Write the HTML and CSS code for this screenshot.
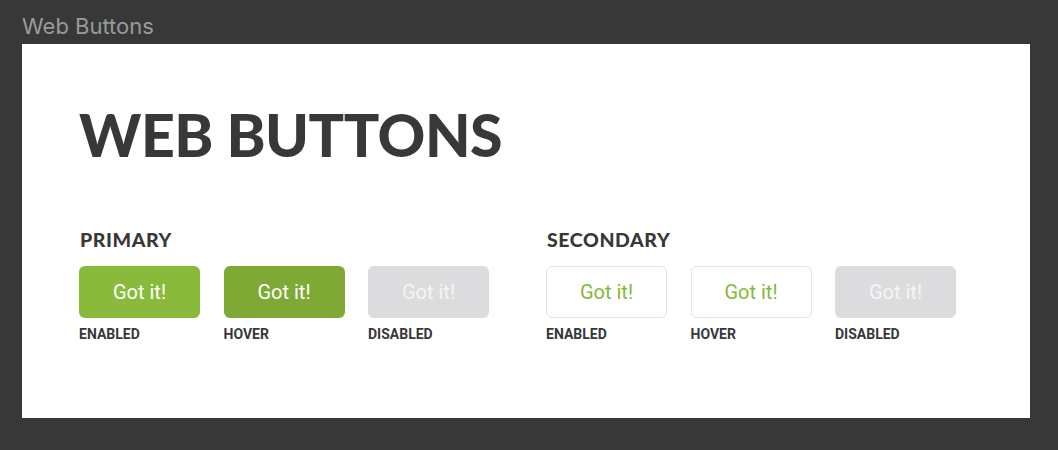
FILE: index.html
```html
<!DOCTYPE html>
<html>
<head>
<meta charset="utf-8">
<link rel="stylesheet" href="styles.css">
</head>
<body>
<div class="frame-title">Web Buttons</div>
<div class="panel">
  <h1 class="heading">WEB BUTTONS</h1>
  <div class="groups">
    <section class="group">
      <h2 class="group-title">PRIMARY</h2>
      <div class="row">
        <div class="item"><div class="btn btn-primary">Got it!</div><div class="state">ENABLED</div></div>
        <div class="item"><div class="btn btn-primary-hover">Got it!</div><div class="state">HOVER</div></div>
        <div class="item"><div class="btn btn-disabled">Got it!</div><div class="state">DISABLED</div></div>
      </div>
    </section>
    <section class="group">
      <h2 class="group-title">SECONDARY</h2>
      <div class="row">
        <div class="item"><div class="btn btn-secondary">Got it!</div><div class="state">ENABLED</div></div>
        <div class="item"><div class="btn btn-secondary">Got it!</div><div class="state">HOVER</div></div>
        <div class="item"><div class="btn btn-disabled">Got it!</div><div class="state">DISABLED</div></div>
      </div>
    </section>
  </div>
</div>
</body>
</html>
```

FILE: styles.css
```css
html, body {
  margin: 0;
  padding: 0;
}
body {
  background: #383838;
  width: 1058px;
  height: 450px;
  overflow: hidden;
  font-family: Roboto, "Liberation Sans", sans-serif;
}
.frame-title {
  margin-left: 22px;
  padding-top: 13px;
  height: 44px;
  box-sizing: border-box;
  font-family: Inter, "Liberation Sans", sans-serif;
  font-size: 22px;
  line-height: 26px;
  color: #9a9a9a;
}
.panel {
  margin-left: 22px;
  width: 1008px;
  height: 374px;
  background: #ffffff;
  box-sizing: border-box;
  padding: 56px 0 0 57px;
}
.heading {
  margin: 0;
  font-family: Lato, "Open Sans", sans-serif;
  font-weight: 900;
  font-size: 59px;
  line-height: 70px;
  color: #383838;
  letter-spacing: -0.5px;
}
.groups {
  display: grid;
  grid-template-columns: 467px 420px;
  margin-top: 59px;
}
.group-title {
  margin: 0 0 15px 1px;
  font-family: Lato, "Open Sans", sans-serif;
  font-weight: 900;
  font-size: 19.5px;
  line-height: 22px;
  color: #383838;
  letter-spacing: 0.6px;
}
.row {
  display: flex;
  gap: 23.5px;
}
.item {
  width: 121px;
}
.btn {
  box-sizing: border-box;
  width: 121px;
  height: 52px;
  border-radius: 6px;
  display: flex;
  align-items: center;
  justify-content: center;
  font-family: Roboto, sans-serif;
  font-weight: 400;
  font-size: 20px;
  color: #ffffff;
}
.btn-primary { background: #8aba3c; }
.btn-primary-hover { background: #7fa935; }
.btn-disabled { background: #dcdcde; color: #f4f4f5; }
.btn-secondary {
  background: #ffffff;
  border: 1px solid #e4e4e6;
  color: #86b83a;
}
.state {
  margin-top: 8px;
  font-family: Roboto, sans-serif;
  font-weight: 700;
  font-size: 14px;
  line-height: 16px;
  color: #383838;
}
```
